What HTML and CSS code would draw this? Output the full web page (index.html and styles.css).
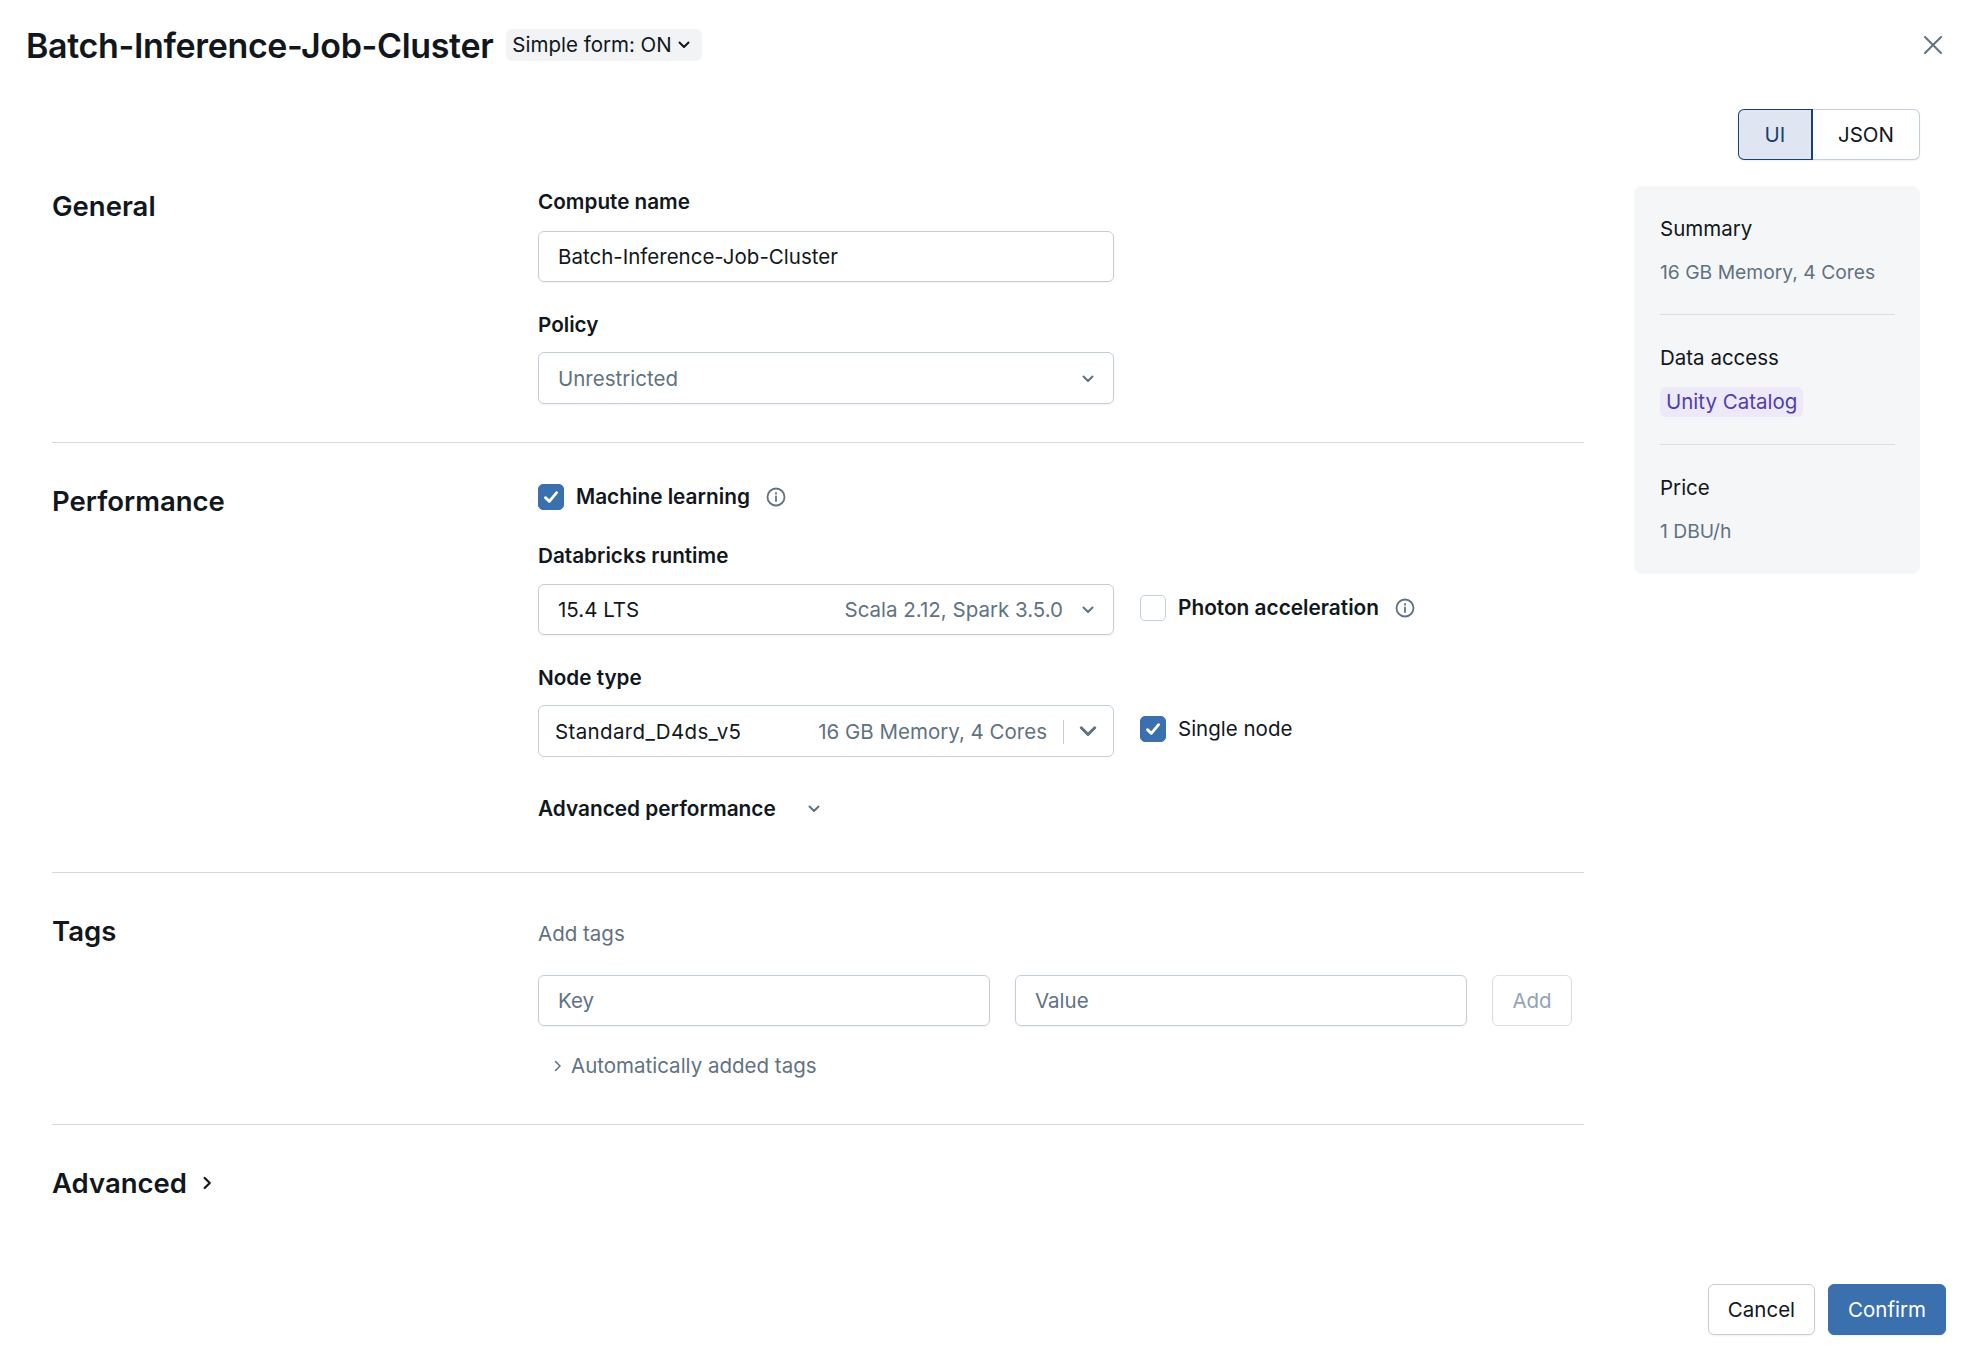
FILE: index.html
```html
<!DOCTYPE html>
<html lang="en">
<head>
  <meta charset="UTF-8">
  <title>Batch-Inference-Job-Cluster</title>
  <link rel="stylesheet" href="styles.css">
</head>
<body>

<div class="page">
  <header class="top">
    <h1>Batch-Inference-Job-Cluster</h1>
    <span class="form-badge">Simple form: ON
      <svg class="chev-badge" viewBox="0 0 12 8"><path d="M1.5 1.5 6 6l4.500-4.500"/></svg>
    </span>
    <svg class="close" viewBox="0 0 20 20"><path d="M2 2l16 16M18 2 2 18"/></svg>
  </header>

  <div class="view-row">
    <div class="segment">
      <span class="seg seg-on">UI</span>
      <span class="seg">JSON</span>
    </div>
  </div>

  <div class="main">
    <div class="form">
      <section class="sec">
        <h2>General</h2>
        <div class="fields">
          <label class="lbl">Compute name</label>
          <div class="box"><span>Batch-Inference-Job-Cluster</span></div>
          <label class="lbl lbl-next">Policy</label>
          <div class="box box-sel">
            <span class="muted">Unrestricted</span>
            <svg class="chev" viewBox="0 0 12 8"><path d="M1.500 1.500 6 6l4.500-4.500"/></svg>
          </div>
        </div>
      </section>

      <section class="sec">
        <h2>Performance</h2>
        <div class="fields">
          <div class="check-row">
            <span class="check check-on"><svg viewBox="0 0 16 16"><path d="M3.500 8.500 6.700 11.500 12.500 4.500"/></svg></span>
            <span class="strong">Machine learning</span>
            <svg class="info" viewBox="0 0 20 20"><circle cx="10" cy="10" r="8.500"/><path d="M10 9.500v4.500M10 6v.8"/></svg>
          </div>
          <label class="lbl lbl-runtime">Databricks runtime</label>
          <div class="with-side">
            <div class="box box-sel box-runtime">
              <span>15.4 LTS</span>
              <span class="muted sel-right">Scala 2.12, Spark 3.5.0</span>
              <svg class="chev" viewBox="0 0 12 8"><path d="M1.500 1.500 6 6l4.500-4.500"/></svg>
            </div>
            <div class="check-row side-photon">
              <span class="check"></span>
              <span class="strong">Photon acceleration</span>
              <svg class="info" viewBox="0 0 20 20"><circle cx="10" cy="10" r="8.500"/><path d="M10 9.500v4.500M10 6v.8"/></svg>
            </div>
          </div>
          <label class="lbl lbl-next">Node type</label>
          <div class="with-side">
            <div class="box box-node">
              <span class="node-name">Standard_D4ds_v5</span>
              <span class="muted sel-right">16 GB Memory, 4 Cores</span>
              <i class="node-sep"></i>
              <svg class="chev chev-big" viewBox="0 0 14 9"><path d="M1.500 1.500 7 7l5.500-5.500"/></svg>
            </div>
            <div class="check-row side-single">
              <span class="check check-on"><svg viewBox="0 0 16 16"><path d="M3.500 8.500 6.700 11.500 12.500 4.500"/></svg></span>
              <span>Single node</span>
            </div>
          </div>
          <div class="adv-perf">
            <span class="strong">Advanced performance</span>
            <svg class="chev" viewBox="0 0 12 8"><path d="M1.500 1.500 6 6l4.500-4.500"/></svg>
          </div>
        </div>
      </section>

      <section class="sec">
        <h2>Tags</h2>
        <div class="fields">
          <div class="muted add-tags">Add tags</div>
          <div class="tag-row">
            <div class="box tag-input"><span class="muted">Key</span></div>
            <div class="box tag-input"><span class="muted">Value</span></div>
            <div class="add-btn">Add</div>
          </div>
          <div class="auto-tags muted">
            <svg class="chev-right" viewBox="0 0 8 12"><path d="M1.500 1.500 6 6l-4.500 4.500"/></svg>
            Automatically added tags
          </div>
        </div>
      </section>

      <section class="sec-last">
        <h2>Advanced</h2>
        <svg class="chev-adv" viewBox="0 0 8 12"><path d="M1.500 1.500 6 6l-4.500 4.500"/></svg>
      </section>
    </div>

    <aside class="summary">
      <div class="sum-title">Summary</div>
      <div class="muted sum-val sum-tight">16 GB Memory, 4 Cores</div>
      <hr>
      <div class="sum-title">Data access</div>
      <div class="sum-val"><span class="uc-tag">Unity Catalog</span></div>
      <hr>
      <div class="sum-title">Price</div>
      <div class="muted sum-val sum-tight">1 DBU/h</div>
    </aside>
  </div>

  <footer class="foot">
    <button class="btn">Cancel</button>
    <button class="btn btn-primary">Confirm</button>
  </footer>
</div>

</body>
</html>
```

FILE: styles.css
```css
* {
  box-sizing: border-box;
}

body {
  margin: 0;
  background: #ffffff;
  color: #11171c;
  font-family: 'Inter', 'Liberation Sans', sans-serif;
  font-size: 20.500px;
  line-height: 30px;
}

svg {
  fill: none;
  stroke-linecap: round;
  stroke-linejoin: round;
  flex: none;
}

.page {
  display: flex;
  flex-direction: column;
  height: 1370px;
  overflow: hidden;
}

.muted {
  color: #5f7281;
}

.strong {
  font-size: 20.800px;
  font-weight: 600;
}

/* Header */
.top {
  display: flex;
  align-items: center;
  height: 90px;
  padding: 0 26px;
}

.top h1 {
  margin: 2px 0 0;
  font-size: 34px;
  line-height: 44px;
  font-weight: 600;
  letter-spacing: -0.350px;
}

.form-badge {
  display: flex;
  align-items: center;
  gap: 6px;
  height: 32px;
  margin-left: 13px;
  padding: 0 12px 0 6px;
  border-radius: 6px;
  background: #f2f3f5;
}

.chev-badge {
  width: 12px;
  height: 8px;
  stroke: #11171c;
  stroke-width: 2;
}

.close {
  width: 20px;
  height: 20px;
  margin-left: auto;
  margin-right: 9px;
  stroke: #5f7281;
  stroke-width: 2;
}

.view-row {
  display: flex;
  justify-content: flex-end;
  padding: 19px 58px 0 0;
}

.segment {
  display: flex;
  height: 51px;
  border-radius: 6px;
  box-shadow: 0 1px 2px rgba(0, 0, 0, 0.06);
}

.seg {
  display: flex;
  align-items: center;
  justify-content: center;
  width: 107px;
  border: 1px solid #c4ced8;
  border-left: 0;
  border-radius: 0 6px 6px 0;
}

.seg-on {
  width: 75px;
  border: 1px solid #1b3f6e;
  border-right-width: 2px;
  border-radius: 6px 0 0 6px;
  background: #dfe6f1;
  color: #1b3f6e;
}

/* Form */
.main {
  display: flex;
  align-items: flex-start;
  padding: 27px 58px 0 52px;
}

.form {
  width: 1532px;
}

.sec {
  display: grid;
  grid-template-columns: 486px 1fr;
  border-bottom: 1px solid #d3d9e1;
  padding-bottom: 38px;
  padding-top: 39px;
}

.sec:first-child {
  padding-top: 0;
}

.sec h2,
.sec-last h2 {
  margin: 0;
  font-size: 27.500px;
  line-height: 38px;
  font-weight: 600;
}

.lbl {
  display: block;
  font-size: 20.700px;
  font-weight: 600;
}

.lbl-next {
  margin-top: 28px;
}

.lbl-runtime {
  margin-top: 29px;
}

.box {
  display: flex;
  align-items: center;
  width: 576px;
  height: 51px;
  margin-top: 14px;
  padding: 0 19px;
  border: 1px solid #c4ced8;
  border-radius: 6px;
  box-shadow: 0 1px 2px rgba(0, 0, 0, 0.06);
}

.box-sel {
  height: 52px;
  margin-top: 12px;
  padding-top: 1px;
}

.box-runtime {
  height: 51px;
  margin-top: 13px;
  padding-top: 0;
}

.box-node {
  height: 52px;
  margin-top: 12px;
  padding: 1px 16px 0;
  box-shadow: none;
}

.node-name {
  letter-spacing: 0.350px;
}

.sel-right {
  margin-left: auto;
}

.chev {
  width: 12px;
  height: 8px;
  stroke: #5f7281;
  stroke-width: 2;
}

.box-sel .chev {
  margin-left: auto;
}

.box-sel .sel-right + .chev {
  margin-left: 19px;
}

.node-sep {
  width: 1px;
  height: 24px;
  margin: 0 15px 0 16px;
  background: #c4ced8;
}

.chev-big {
  width: 18px;
  height: 11px;
  stroke-width: 2.400;
}

.check-row {
  display: flex;
  align-items: center;
  height: 30px;
}

.check {
  display: flex;
  align-items: center;
  justify-content: center;
  width: 26px;
  height: 26px;
  margin-right: 12px;
  border: 1px solid #c4ced8;
  border-radius: 5px;
  background: #ffffff;
}

.check-on {
  border-color: #3b70ae;
  background: #3b70ae;
}

.check svg {
  width: 20px;
  height: 20px;
  stroke: #ffffff;
  stroke-width: 2.200;
}

.info {
  width: 20px;
  height: 20px;
  margin-left: 16px;
  stroke: #5f7281;
  stroke-width: 1.800;
}

.with-side {
  display: flex;
  align-items: flex-start;
  gap: 26px;
}

.side-photon {
  margin-top: 22px;
}

.side-single {
  margin-top: 21px;
}

.with-side .box {
  flex: none;
}

.adv-perf {
  display: flex;
  align-items: center;
  gap: 32px;
  margin-top: 37px;
  margin-bottom: 10px;
}

.add-tags {
  margin-top: 7px;
}

.tag-row {
  display: flex;
  gap: 25px;
  margin-top: 12px;
}

.tag-input {
  width: 452px;
  padding-top: 1px;
}

.add-btn {
  display: flex;
  align-items: center;
  justify-content: center;
  width: 80px;
  height: 51px;
  margin-top: 14px;
  padding-top: 1px;
  border: 1px solid #d8dee6;
  border-radius: 6px;
  color: #92a4b3;
}

.auto-tags {
  display: flex;
  align-items: center;
  gap: 9px;
  margin-top: 25px;
  margin-bottom: 5px;
  padding-left: 16px;
}

.chev-right {
  width: 8px;
  height: 12px;
  stroke: #5f7281;
  stroke-width: 1.500;
}

.sec-last {
  display: flex;
  align-items: center;
  gap: 16px;
  padding-top: 39px;
}

.chev-adv {
  width: 9px;
  height: 14px;
  stroke: #11171c;
  stroke-width: 2;
}

/* Summary card */
.summary {
  width: 286px;
  height: 388px;
  margin-top: -1px;
  margin-left: 50px;
  padding: 28px 25px 0 26px;
  border-radius: 8px;
  background: #f5f6f8;
}

.sum-val {
  margin-top: 14.500px;
  font-size: 19.300px;
}

.sum-tight {
  margin-top: 12.500px;
}

.summary hr {
  margin: 27px 0 28px;
  border: 0;
  border-top: 1px solid #d8dee6;
}

.uc-tag {
  display: inline-block;
  padding: 0 6px;
  border-radius: 6px;
  background: #ede9f8;
  color: #4f3fae;
  font-size: 20.500px;
}

/* Footer */
.foot {
  display: flex;
  justify-content: flex-end;
  gap: 13px;
  margin-top: auto;
  padding: 0 32px 35px 0;
}

.btn {
  height: 51px;
  padding: 0 19px;
  border: 1px solid #c4ced8;
  border-radius: 6px;
  background: #ffffff;
  color: #11171c;
  font: inherit;
  box-shadow: 0 1px 2px rgba(0, 0, 0, 0.06);
}

.btn-primary {
  border-color: #3b70ae;
  background: #3b70ae;
  color: #ffffff;
}
```
